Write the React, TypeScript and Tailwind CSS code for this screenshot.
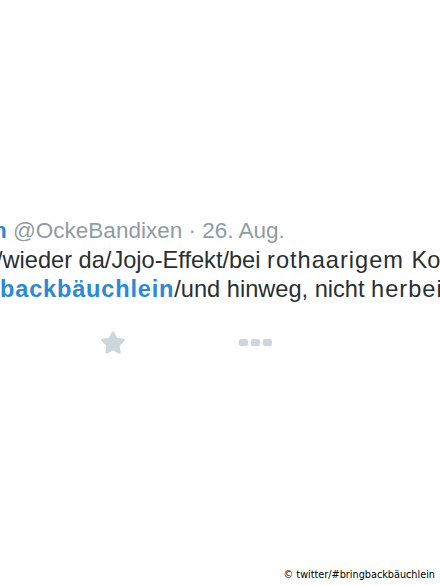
import { Star } from 'lucide-react';

const ARIAL = { fontFamily: '"Liberation Sans", Arial, sans-serif' };

export default function App() {
  return (
    <div className="flex h-[586px] w-[440px] flex-col overflow-hidden bg-white">
      {/* tweet, cropped on both sides */}
      <div className="pt-[216px] leading-[29.5px] whitespace-nowrap" style={ARIAL}>
        <div className="ml-[-7px] text-[22.5px] text-[#8f9ba5]">
          <span className="font-bold text-[#2a8ad8]">n</span> @OckeBandixen · 26. Aug.
        </div>
        <div className="ml-[-4px] text-[23.6px] text-[#292f33]">
          /wieder da/Jojo-Effekt/bei <span className="tracking-[1px]">rothaarigem </span>Kopf
        </div>
        <div className="ml-[0px] text-[23.6px] text-[#292f33]">
          <span className="font-bold tracking-[0.8px] text-[#2a8ad8]">backbäuchlein</span>/und hinweg, nicht{' '}
          <span className="tracking-[1px]">herbei</span>
        </div>
      </div>

      {/* actions */}
      <div className="mt-[25px] flex items-center">
        <Star className="ml-[100px] h-[26px] w-[26px] fill-[#ccd6dd] text-[#ccd6dd]" strokeWidth={1.5} />
        <div className="ml-[113px] flex gap-[3px]">
          <span className="h-[7px] w-[9px] rounded-[2px] bg-[#ccd6dd]" />
          <span className="h-[7px] w-[9px] rounded-[2px] bg-[#ccd6dd]" />
          <span className="h-[7px] w-[9px] rounded-[2px] bg-[#ccd6dd]" />
        </div>
      </div>

      <div
        className="mt-auto self-end pr-[5px] pb-[3px] text-[9.7px] text-black"
        style={{ fontFamily: '"DejaVu Sans", Verdana, sans-serif' }}
      >
        © twitter/#bringbackbäuchlein
      </div>
    </div>
  );
}
